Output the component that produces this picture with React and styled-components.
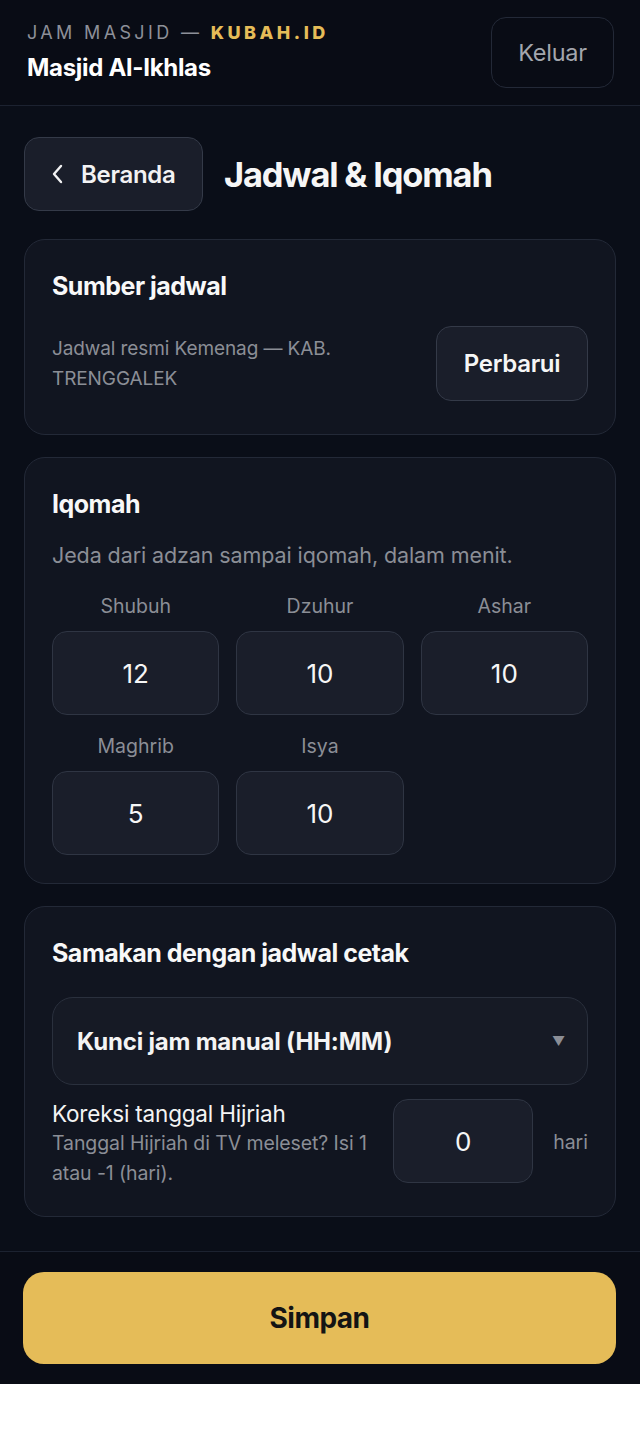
import React from 'react'
import styled, { createGlobalStyle } from 'styled-components';

const Global = createGlobalStyle`
    body {
        margin: 0;
        background: #ffffff;
        font-family: Inter, "Noto Sans", sans-serif;
        -webkit-font-smoothing: antialiased;
    }
    * { box-sizing: border-box; }
`;

const Page = styled.div`
    background: #0a0e18;
    color: #f4f4f5;
    height: 1384px;
    display: flex;
    flex-direction: column;
`;

const Header = styled.header`
    height: 106px;
    padding: 17px 26px 0 27px;
    display: flex;
    justify-content: space-between;
    align-items: flex-start;
    background: #090c15;
    border-bottom: 1px solid #1c2230;
`;

const Brand = styled.div`
    padding-top: 4px;
`;

const Kicker = styled.div`
    font-size: 18px;
    letter-spacing: 3.35px;
    color: #8d9099;
    line-height: 23px;
    b {
        color: #e5bc58;
        font-weight: 800;
        letter-spacing: 3.5px;
    }
`;

const MosqueName = styled.div`
    margin-top: 9px;
    font-size: 24px;
    font-weight: 700;
    letter-spacing: -0.3px;
    color: #ffffff;
`;

const GhostButton = styled.button`
    width: 123px;
    height: 71px;
    border-radius: 15px;
    border: 1px solid #232937;
    background: transparent;
    color: #a3a6ad;
    font-family: inherit;
    font-size: 23.5px;
    letter-spacing: -0.3px;
`;

const Main = styled.main`
    flex: 1;
    padding: 31px 24px 0 24px;
    display: flex;
    flex-direction: column;
    gap: 22px;
`;

const TitleRow = styled.div`
    display: flex;
    align-items: center;
    gap: 21px;
    margin-bottom: 6px;
`;

const BackButton = styled.button`
    width: 179px;
    height: 74px;
    border-radius: 15px;
    border: 1px solid #343a48;
    background: #1a1e2a;
    color: #f2f2f3;
    font-family: inherit;
    font-size: 24px;
    font-weight: 600;
    letter-spacing: -0.3px;
    display: flex;
    align-items: center;
    gap: 16px;
    padding-left: 26px;
`;

const PageTitle = styled.h1`
    margin: 0;
    font-size: 34.5px;
    font-weight: 700;
    letter-spacing: -1.2px;
    color: #f6f6f6;
`;

const Card = styled.section`
    background: #111520;
    border: 1px solid #232937;
    border-radius: 21px;
    padding: ${p => p.$pad || '30px 27px 32px 27px'};
`;

const CardTitle = styled.h2`
    margin: 0;
    font-size: 25px;
    font-weight: 700;
    letter-spacing: -0.5px;
    color: #f8f8f8;
    line-height: 30px;
`;

const SourceRow = styled.div`
    margin-top: 25px;
    display: flex;
    justify-content: space-between;
    align-items: center;
`;

const Muted = styled.p`
    margin: ${p => p.$m || '0'};
    font-size: ${p => p.$size || '19px'};
    line-height: ${p => p.$lh || '30px'};
    color: #8b8e96;
    letter-spacing: -0.1px;
`;

const SecondaryButton = styled.button`
    width: 152px;
    height: 75px;
    border-radius: 15px;
    border: 1px solid #343a48;
    background: #1a1e2a;
    color: #f6f6f6;
    font-family: inherit;
    font-size: 24px;
    font-weight: 600;
    letter-spacing: -0.3px;
`;

const PrayerGrid = styled.div`
    margin-top: 24px;
    display: grid;
    grid-template-columns: repeat(3, 1fr);
    column-gap: 17px;
    row-gap: 19px;
`;

const Field = styled.label`
    display: flex;
    flex-direction: column;
    align-items: center;
    gap: 13px;
`;

const FieldLabel = styled.span`
    font-size: 19.5px;
    color: #8b8e96;
    line-height: 24px;
`;

const NumberBox = styled.div`
    width: ${p => p.$w || '100%'};
    height: 84px;
    border-radius: 15px;
    border: 1px solid #2f3543;
    background: #1a1e2a;
    display: flex;
    align-items: center;
    justify-content: center;
    font-size: 26px;
    color: #f6f6f6;
`;

const Select = styled.div`
    margin-top: 29px;
    height: 88px;
    border-radius: 21px;
    border: 1px solid #2a303d;
    background: #161a25;
    display: flex;
    align-items: center;
    justify-content: space-between;
    padding: 0 22px 0 24px;
    font-size: 24px;
    font-weight: 700;
    letter-spacing: -0.2px;
    color: #f4f4f4;
`;

const Caret = styled.span`
    font-size: 13px;
    color: #8b8e96;
    font-weight: 400;
`;

const HijriRow = styled.div`
    margin-top: 14px;
    display: flex;
    align-items: flex-start;
    gap: 20px;
`;

const HijriText = styled.div`
    flex: 1;
    padding-top: 1px;
`;

const HijriLabel = styled.div`
    font-size: 22.5px;
    color: #f4f4f4;
    line-height: 28px;
    letter-spacing: -0.2px;
`;

const Unit = styled.span`
    align-self: center;
    font-size: 19.5px;
    color: #8b8e96;
    margin-top: -4px;
`;

const Footer = styled.footer`
    border-top: 1px solid #1c2230;
    background: #090c15;
    padding: 20px 24px 20px 23px;
`;

const PrimaryButton = styled.button`
    width: 100%;
    height: 92px;
    border: none;
    border-radius: 21px;
    background: #e5bc58;
    color: #141414;
    font-family: inherit;
    font-size: 28px;
    font-weight: 700;
    letter-spacing: -0.5px;
`;

const prayers = [
    { name: 'Shubuh', value: 12 },
    { name: 'Dzuhur', value: 10 },
    { name: 'Ashar', value: 10 },
    { name: 'Maghrib', value: 5 },
    { name: 'Isya', value: 10 },
];

const ChevronLeft = () => (
    <svg width="14" height="22" viewBox="0 0 14 22" fill="none">
        <path d="M10 3 L3 11 L10 19" stroke="#f2f2f3" strokeWidth="2.4" strokeLinecap="round" strokeLinejoin="round"/>
    </svg>
);

const App = () => (
    <Page>
        <Global/>
        <Header>
            <Brand>
                <Kicker>JAM MASJID — <b>KUBAH.ID</b></Kicker>
                <MosqueName>Masjid Al-Ikhlas</MosqueName>
            </Brand>
            <GhostButton>Keluar</GhostButton>
        </Header>
        <Main>
            <TitleRow>
                <BackButton><ChevronLeft/>Beranda</BackButton>
                <PageTitle>Jadwal &amp; Iqomah</PageTitle>
            </TitleRow>

            <Card $pad="31px 27px 33px 27px">
                <CardTitle>Sumber jadwal</CardTitle>
                <SourceRow>
                    <Muted>Jadwal resmi Kemenag — KAB.<br/>TRENGGALEK</Muted>
                    <SecondaryButton>Perbarui</SecondaryButton>
                </SourceRow>
            </Card>

            <Card $pad="31px 27px 28px 27px">
                <CardTitle>Iqomah</CardTitle>
                <Muted $size="21.5px" $m="21px 0 0 0">Jeda dari adzan sampai iqomah, dalam menit.</Muted>
                <PrayerGrid>
                    {prayers.map((p) => (
                        <Field key={p.name}>
                            <FieldLabel>{p.name}</FieldLabel>
                            <NumberBox>{p.value}</NumberBox>
                        </Field>
                    ))}
                </PrayerGrid>
            </Card>

            <Card $pad="31px 27px 28px 27px">
                <CardTitle>Samakan dengan jadwal cetak</CardTitle>
                <Select>
                    Kunci jam manual (HH:MM)
                    <Caret>▼</Caret>
                </Select>
                <HijriRow>
                    <HijriText>
                        <HijriLabel>Koreksi tanggal Hijriah</HijriLabel>
                        <Muted $size="19.5px" $lh="30px">Tanggal Hijriah di TV meleset? Isi 1<br/>atau -1 (hari).</Muted>
                    </HijriText>
                    <NumberBox $w="140px">0</NumberBox>
                    <Unit>hari</Unit>
                </HijriRow>
            </Card>
        </Main>
        <Footer>
            <PrimaryButton>Simpan</PrimaryButton>
        </Footer>
    </Page>
);

export default App;
